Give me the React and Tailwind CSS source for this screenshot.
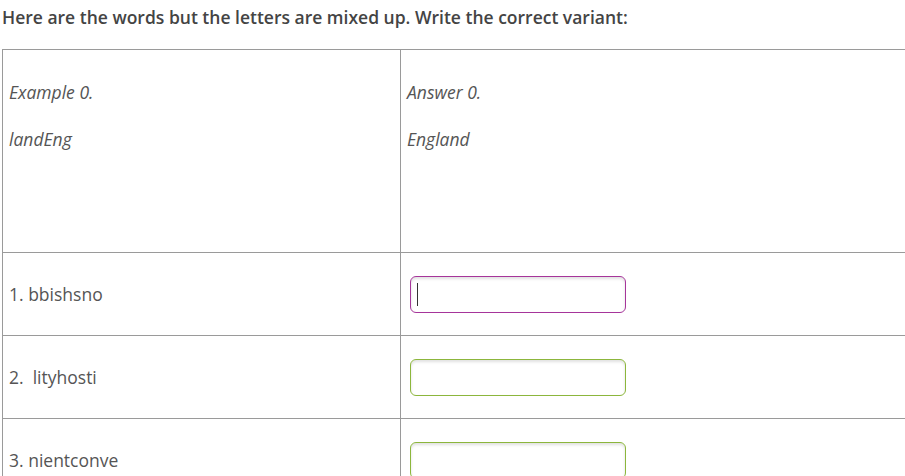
// scrambled words exercise
const rows = [
  { label: "1. bbishsno", state: "focus" },
  { label: "2.  lityhosti", state: "idle" },
  { label: "3. nientconve", state: "idle" },
];

function WordInput({ state }) {
  return (
    <div className="relative">
      <input
        type="text"
        className={`h-[37px] w-[216px] rounded-[6px] border bg-white px-2 text-[17.5px] text-[#444] outline-none shadow-[inset_0_2px_3px_rgba(0,0,0,0.12)] ${
          state === "focus" ? "border-[#a6359a]" : "border-[#8cb63c]"
        }`}
      />
      {state === "focus" && (
        <span className="pointer-events-none absolute left-[7px] top-[7px] h-[23px] w-px bg-[#333]" />
      )}
    </div>
  );
}

export default function App() {
  return (
    <div
      className="h-[476px] w-[905px] overflow-hidden bg-white pl-[2px] text-[#555]"
      style={{ fontFamily: '"Open Sans", "Liberation Sans", sans-serif' }}
    >
      <h1 className="pt-[5px] text-[17.5px] font-semibold leading-[24px] text-[#444]">
        Here are the words but the letters are mixed up. Write the correct
        variant:
      </h1>

      <div className="mt-[20px] grid w-[1010px] grid-cols-[398px_1fr] border-l border-t border-[#9a9a9a]">
        {/* example row */}
        <div className="h-[203px] border-b border-r border-[#9a9a9a] px-[6px] pt-[30px] text-[17.5px] italic leading-[24px]">
          <p>Example 0.</p>
          <p className="mt-[23px]">landEng</p>
        </div>
        <div className="h-[203px] border-b border-[#9a9a9a] px-[6px] pt-[30px] text-[17.5px] italic leading-[24px]">
          <p>Answer 0.</p>
          <p className="mt-[23px]">England</p>
        </div>

        {rows.map((row) => (
          <div key={row.label} className="contents">
            <div className="flex h-[83px] items-center border-b border-r border-[#9a9a9a] px-[6px] text-[17.5px] leading-[24px]">
              <span className="whitespace-pre">{row.label}</span>
            </div>
            <div className="flex h-[83px] items-center border-b border-[#9a9a9a] pl-[9px]">
              <WordInput state={row.state} />
            </div>
          </div>
        ))}
      </div>
    </div>
  );
}
